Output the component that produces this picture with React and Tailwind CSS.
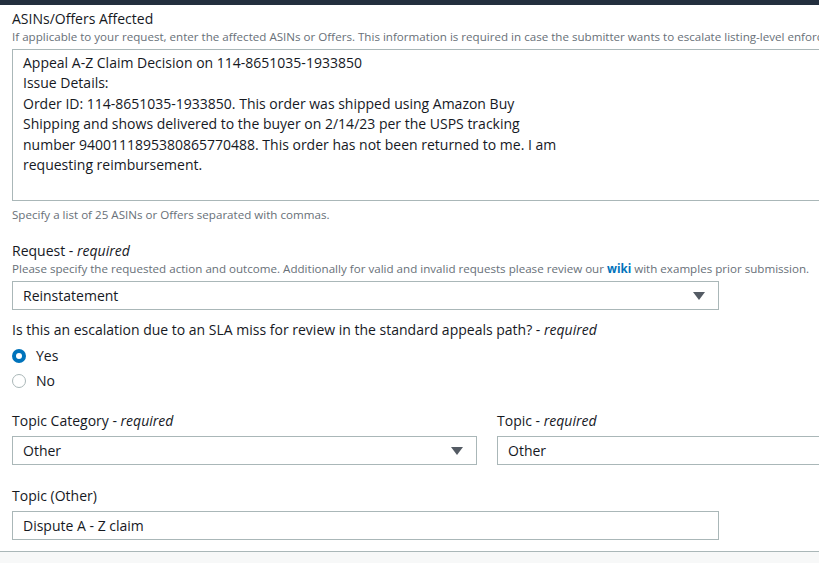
import React, { useState } from 'react';

function Label({ children, required }) {
  return (
    <div className="text-[14px] leading-[20px] text-[#16191f]">
      {children}
      {required && (
        <>
          {' - '}
          <i>required</i>
        </>
      )}
    </div>
  );
}

function Hint({ children, className = '' }) {
  return (
    <div className={`whitespace-nowrap text-[11.6px] leading-[16px] text-[#687078] ${className}`}>{children}</div>
  );
}

function Caret() {
  return (
    <svg width="12" height="8" viewBox="0 0 12 8" className="shrink-0">
      <path d="M0 0h12L6 8z" fill="#545b64" />
    </svg>
  );
}

function Select({ value, className = '', caret = true }) {
  return (
    <div
      className={`flex h-[29px] items-center justify-between border border-[#aab7b8] bg-white pl-[10px] pr-[13px] text-[14px] text-[#16191f] ${className}`}
    >
      <span>{value}</span>
      {caret && <Caret />}
    </div>
  );
}

function Radio({ checked, label, onClick }) {
  return (
    <button type="button" onClick={onClick} className="flex h-[25px] items-center gap-[10px] text-[14px] text-[#16191f]">
      {checked ? (
        <span className="flex h-[14px] w-[14px] items-center justify-center rounded-full bg-[#0073bb]">
          <span className="h-[6px] w-[6px] rounded-full bg-white" />
        </span>
      ) : (
        <span className="h-[14px] w-[14px] rounded-full border border-[#aab7b8] bg-white" />
      )}
      {label}
    </button>
  );
}

export default function App() {
  const [escalation, setEscalation] = useState('yes');

  return (
    <div className="h-[563px] w-[819px] overflow-hidden bg-white font-['Open_Sans',sans-serif]">
      <div className="h-[5px] bg-[#232f3e]" />

      <div className="pl-[12px]">
        {/* ASINs / offers */}
        <div className="pt-[4px]">
          <Label>ASINs/Offers Affected</Label>
          <Hint>
            If applicable to your request, enter the affected ASINs or Offers. This information is required in case the submitter wants to escalate listing-level enforcement.
          </Hint>
          <div className="mt-[4px] h-[152px] border border-r-0 border-[#aab7b8] pl-[10px] pt-[3px] text-[14px] leading-[20.4px] text-[#16191f]">
            Appeal A-Z Claim Decision on 114-8651035-1933850
            <br />
            Issue Details:
            <br />
            Order ID: 114-8651035-1933850. This order was shipped using Amazon Buy
            <br />
            Shipping and shows delivered to the buyer on 2/14/23 per the USPS tracking
            <br />
            number 9400111895380865770488. This order has not been returned to me. I am
            <br />
            requesting reimbursement.
          </div>
          <Hint className="mt-[6px]">Specify a list of 25 ASINs or Offers separated with commas.</Hint>
        </div>

        {/* Request */}
        <div className="mt-[18px]">
          <Label required>Request</Label>
          <Hint>
            Please specify the requested action and outcome. Additionally for valid and invalid requests please review our{' '}
            <a href="#" className="font-bold text-[#0073bb]">wiki</a> with examples prior submission.
          </Hint>
          <Select value="Reinstatement" className="mt-[4px] w-[707px]" />
        </div>

        {/* SLA escalation */}
        <div className="mt-[10px]">
          <Label required>Is this an escalation due to an SLA miss for review in the standard appeals path?</Label>
          <div className="mt-[3px] flex flex-col">
            <Radio checked={escalation === 'yes'} label="Yes" onClick={() => setEscalation('yes')} />
            <Radio checked={escalation === 'no'} label="No" onClick={() => setEscalation('no')} />
          </div>
        </div>

        {/* Topic */}
        <div className="mt-[18px] flex gap-[20px]">
          <div className="w-[465px] shrink-0">
            <Label required>Topic Category</Label>
            <Select value="Other" className="mt-[5px]" />
          </div>
          <div className="flex-1">
            <Label required>Topic</Label>
            <Select value="Other" caret={false} className="mt-[5px] border-r-0" />
          </div>
        </div>

        <div className="mt-[21px]">
          <Label>Topic (Other)</Label>
          <div className="mt-[5px] flex h-[29px] w-[707px] items-center border border-[#aab7b8] pl-[10px] text-[14px] text-[#16191f]">
            Dispute A - Z claim
          </div>
        </div>
      </div>

      <div className="mt-[11px] h-[20px] border-t border-[#aab7b8] bg-[#f7f8f8]" />
    </div>
  );
}
